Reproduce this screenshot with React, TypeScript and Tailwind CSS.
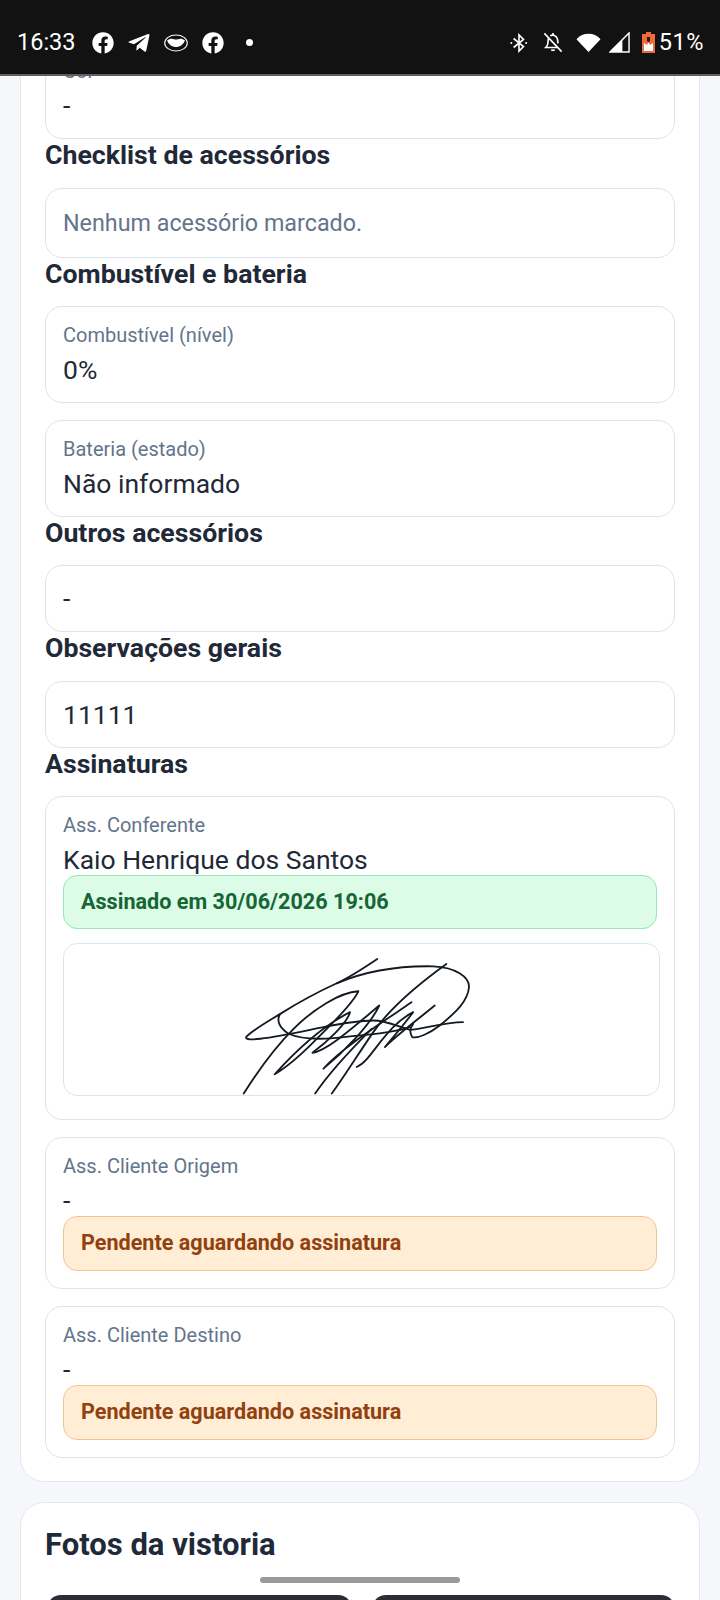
import React from 'react';
import { FaFacebook, FaTelegramPlane } from 'react-icons/fa';

function StatusBar() {
  return (
    <div className="h-[76px] shrink-0 bg-[#121212] border-b-2 border-[#5f5f5f] flex items-center justify-between pl-[17px] pr-[16px] pt-[11px] text-white text-[23.5px] z-10">
      <div className="flex items-center">
        <span className="w-[58px]">16:33</span>
        <FaFacebook className="ml-[17px] w-[22px] h-[22px]" />
        <FaTelegramPlane className="ml-[13px] w-[24px] h-[24px]" />
        <svg viewBox="0 0 24 18" className="ml-[13px] w-[24px] h-[18px]" fill="none">
          <ellipse cx="12" cy="9" rx="11.3" ry="8" stroke="white" strokeWidth="1.1" />
          <path d="M3 6.5 C7 3 10 5.5 12 5.5 C14 5.5 17 3 21 6.5 C19 11 15.5 13 12 13 C8.5 13 5 11 3 6.5Z" fill="white" />
        </svg>
        <FaFacebook className="ml-[14px] w-[22px] h-[22px]" />
        <span className="ml-[22px] w-[7px] h-[7px] rounded-full bg-white" />
      </div>
      <div className="flex items-center">
        <svg viewBox="0 0 20 22" className="w-[18px] h-[20px]" fill="none" stroke="white" strokeWidth="1.8">
          <path d="M4 6 L15 15 L10 20 L10 2 L15 7 L4 16" />
          <circle cx="1.5" cy="11" r="1.1" fill="white" stroke="none" />
          <circle cx="18" cy="11" r="1.1" fill="white" stroke="none" />
        </svg>
        <svg viewBox="0 0 22 22" className="ml-[15px] w-[20px] h-[21px]" fill="none" stroke="white" strokeWidth="1.8">
          <path d="M6 6.5 C5.5 8 5.5 9 5.5 11 C5.5 13 4.5 15 3 16.5 L16 16.5" />
          <path d="M8 3.5 C10.5 2 15 3 16 7.5 L16.5 12" />
          <path d="M9 19.5 L13 19.5" />
          <path d="M11 0.5 L11 3" />
          <path d="M1.5 1 L20.5 21" />
        </svg>
        <svg viewBox="0 0 26 20" className="ml-[13px] w-[25px] h-[21px]" fill="white">
          <path d="M0.5 6.5 C7 -1 19 -1 25.5 6.5 L13 20Z" />
        </svg>
        <svg viewBox="0 0 22 22" className="ml-[8px] w-[21px] h-[21px]" fill="none">
          <path d="M21 1 L21 21 L1 21Z" stroke="white" strokeWidth="1.5" />
          <path d="M14 8 L14 21 L1 21Z" fill="white" />
        </svg>
        <svg viewBox="0 0 13 21" className="ml-[12px] w-[13px] h-[21px]">
          <path d="M4 0 H9 V2 H13 V21 H0 V2 H4Z" fill="#f0693a" />
          <path d="M2 11 L5 13 L6.5 10 L8 13 L11 11 V19 H2Z" fill="white" />
          <path d="M5 5 H8 V9 L6.5 10.5 L5 9Z" fill="#2b1a14" />
        </svg>
        <span className="ml-[4px] tracking-[0.5px]">51%</span>
      </div>
    </div>
  );
}

function Label({ children }: { children: React.ReactNode }) {
  return <div className="text-[20px] leading-[30px] text-[#64748b]">{children}</div>;
}

function Value({ children }: { children: React.ReactNode }) {
  return <div className="text-[26.5px] leading-[39px] text-[#1f2937]">{children}</div>;
}

function Box({ label, value }: { label?: string; value: string }) {
  return (
    <div className="bg-white border border-[#dde5ec] rounded-[17px] px-[17px] py-[13px]">
      {label && <Label>{label}</Label>}
      <Value>{value}</Value>
    </div>
  );
}

function Heading({ children, tight }: { children: React.ReactNode; tight?: boolean }) {
  return (
    <h3 className={`${tight ? 'mb-[16px]' : 'mb-[16.5px]'} text-[26.7px] leading-[32px] font-bold text-[#1f2937]`}>
      {children}
    </h3>
  );
}

function Badge({ ok, children }: { ok?: boolean; children: React.ReactNode }) {
  return (
    <div
      className={`-mt-[4px] flex items-center px-[17px] rounded-[14px] border text-[21.6px] font-bold ${
        ok ? 'h-[54px] bg-[#dcfce7] border-[#98e6b4] text-[#166534]' : 'h-[55px] bg-[#ffedd5] border-[#f5c48c] text-[#92400e]'
      }`}
    >
      {children}
    </div>
  );
}

function Signature() {
  return (
    <div className="mt-[14px] mr-[-3px] h-[153px] bg-white border border-[#dde5ec] rounded-[14px] overflow-hidden">
      <svg viewBox="-351 42 1791 450" className="w-full h-full" fill="none" stroke="#141a22" strokeWidth="5.5" strokeLinejoin="round" strokeLinecap="round">
        {/* top stroke, left lobe, then the long horizontal */}
        <path d="M592 85 C540 120 510 140 470 158 C400 190 340 225 300 250 C260 275 215 300 197 320 C195 328 215 328 240 325 C300 318 370 302 430 290 C480 280 530 270 580 270 C625 270 660 292 690 298 C720 298 790 276 850 275" />
        {/* big oval */}
        <path d="M470 158 C560 120 660 105 760 107 C830 110 870 140 868 170 C865 210 830 245 780 285 C750 308 715 325 697 320 C688 305 692 290 700 280" />
        <path d="M300 250 C288 268 295 290 325 310 C370 330 450 326 510 318 C580 312 650 305 690 290" />
        {/* zigzags */}
        <path d="M190 490 C240 410 290 345 340 295 C400 235 480 185 535 182 C515 225 440 295 400 335 C360 375 320 410 283 432 C330 380 420 290 510 245 C500 280 440 335 397 367 C440 362 520 290 598 225 C570 285 490 365 430 415 C490 350 600 280 695 215" />
        <path d="M800 100 C710 165 625 240 580 305 C535 370 495 435 455 490" />
        <path d="M405 490 C445 430 510 360 575 295" />
        <path d="M530 410 C565 395 590 340 640 290 C660 270 680 255 700 245 C670 285 640 320 615 350 C650 315 710 270 765 225" />
      </svg>
    </div>
  );
}

export default function App() {
  return (
    <div className="relative w-[720px] h-[1600px] overflow-hidden flex flex-col bg-[#f5f7fb] font-['Roboto',sans-serif]">
      <StatusBar />
      <div className="flex-1 overflow-hidden px-[20px]">
        <div className="-mt-[59px] bg-white border border-[#e4e9f1] rounded-[24px] px-[24px] pt-[24px] pb-[23px]">
          <Box label="Cor" value="-" />
          <Heading>Checklist de acessórios</Heading>
          <div className="bg-white border border-[#dde5ec] rounded-[17px] px-[17px] py-[14px] text-[23.3px] leading-[40px] text-[#64748b]">
            Nenhum acessório marcado.
          </div>
          <Heading>Combustível e bateria</Heading>
          <Box label="Combustível (nível)" value="0%" />
          <div className="mt-[17px]">
            <Box label="Bateria (estado)" value="Não informado" />
          </div>
          <Heading tight>Outros acessórios</Heading>
          <Box value="-" />
          <Heading>Observações gerais</Heading>
          <Box value="11111" />
          <Heading>Assinaturas</Heading>
          <div className="bg-white border border-[#dde5ec] rounded-[17px] px-[17px] pt-[13px] pb-[23px]">
            <Label>Ass. Conferente</Label>
            <Value>Kaio Henrique dos Santos</Value>
            <Badge ok>Assinado em 30/06/2026 19:06</Badge>
            <Signature />
          </div>
          <div className="mt-[17px] bg-white border border-[#dde5ec] rounded-[17px] px-[17px] pt-[13px] pb-[17px]">
            <Label>Ass. Cliente Origem</Label>
            <Value>-</Value>
            <Badge>Pendente aguardando assinatura</Badge>
          </div>
          <div className="mt-[17px] bg-white border border-[#dde5ec] rounded-[17px] px-[17px] pt-[13px] pb-[17px]">
            <Label>Ass. Cliente Destino</Label>
            <Value>-</Value>
            <Badge>Pendente aguardando assinatura</Badge>
          </div>
        </div>
        <div className="mt-[20px] bg-white border border-[#e4e9f1] rounded-[24px] px-[24px] pt-[22px] h-[200px]">
          <h2 className="text-[31px] leading-[40px] font-bold text-[#1f2937]">Fotos da vistoria</h2>
          <div className="mt-[30px] grid grid-cols-2 gap-[20px]">
            <div className="ml-[2px] mr-[-2px] h-[60px] rounded-t-[14px] bg-[#2a2d33]" />
            <div className="ml-[2px] h-[60px] rounded-t-[14px] bg-[#2a2d33]" />
          </div>
        </div>
      </div>
      {/* gesture bar */}
      <div className="absolute left-[260px] top-[1577px] w-[200px] h-[6px] rounded-full bg-[#999999]" />
    </div>
  );
}
